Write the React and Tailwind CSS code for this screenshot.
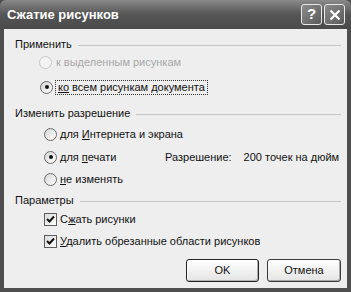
import React from 'react';

const font = { fontFamily: 'Tahoma, "Liberation Sans", "DejaVu Sans", sans-serif' };

const Radio = ({ checked, disabled }) => (
  <span
    className={`relative inline-block w-[13px] h-[13px] rounded-full border shrink-0 ${
      disabled ? 'border-[#c8c8c8] bg-[#f4f4f4]' : 'border-[#6a6a6a] bg-gradient-to-br from-[#d6d6d6] to-white'
    }`}
  >
    {checked && <span className="absolute left-[3.5px] top-[3.5px] w-[4px] h-[4px] rounded-full bg-[#111]" />}
  </span>
);

const Check = () => (
  <span className="inline-flex items-center justify-center w-[13px] h-[13px] border border-[#5c5c5c] bg-gradient-to-br from-[#dcdcdc] to-white shrink-0">
    <svg width="9" height="9" viewBox="0 0 9 9">
      <path d="M1 4 L3.5 6.5 L8 1.5" stroke="#111" strokeWidth="2" fill="none" />
    </svg>
  </span>
);

const Header = ({ children, className }) => (
  <div className={`flex items-center h-[18px] pl-[11px] pr-[6px] ${className}`}>
    <span className="text-[#111] whitespace-nowrap">{children}</span>
    <span className="flex-1 ml-[6px] h-[1px] bg-[#c4c4c4] mt-[2px]" />
  </div>
);

export default function App() {
  return (
    <div className="w-[351px] h-[292px] bg-[#4e4e4e] flex flex-col text-[11px] overflow-hidden" style={font}>
      {/* title bar */}
      <div className="h-[29px] flex items-center rounded-t-[6px] bg-gradient-to-b from-[#8a8a8a] via-[#555] to-[#4a4a4a] pl-[7px] pr-[6px] shrink-0">
        <span className="text-white font-bold text-[13px]" style={{ fontFamily: '"Liberation Sans", sans-serif' }}>
          Сжатие рисунков
        </span>
        <div className="ml-auto flex gap-[2px]">
          <div className="w-[21px] h-[21px] rounded-[3px] border border-[#e8e8e8] bg-gradient-to-br from-[#8c8c8c] to-[#5a5a5a] flex items-center justify-center text-white font-bold text-[15px]">
            ?
          </div>
          <div className="w-[21px] h-[21px] rounded-[3px] border border-[#e8e8e8] bg-gradient-to-br from-[#8c8c8c] to-[#5a5a5a] flex items-center justify-center">
            <svg width="12" height="12" viewBox="0 0 12 12">
              <path d="M1.5 1.5 L10.5 10.5 M10.5 1.5 L1.5 10.5" stroke="#fff" strokeWidth="2.2" />
            </svg>
          </div>
        </div>
      </div>

      {/* body */}
      <div className="flex-1 mx-[4px] mb-[4px] bg-[#eeeeee] flex flex-col pt-[6px] text-[#111]">
        <Header>Применить</Header>
        <div className="flex items-center h-[18px] pl-[35px]">
          <Radio disabled />
          <span className="ml-[4px] text-[#a8a8a8]">к выделенным рисункам</span>
        </div>
        <div className="flex items-center h-[18px] pl-[36px] mt-[7px]">
          <Radio checked />
          <span className="ml-[2px] px-[2px] border border-dotted border-[#333] leading-[13px]">
            <span className="underline">ко</span> всем рисункам документа
          </span>
        </div>

        <Header className="mt-[8px]">Изменить разрешение</Header>
        <div className="flex items-center h-[18px] pl-[40px] mt-[3px]">
          <Radio />
          <span className="ml-[3px]">
            для <span className="underline">И</span>нтернета и экрана
          </span>
        </div>
        <div className="flex items-center h-[18px] pl-[40px] mt-[5px]">
          <Radio checked />
          <span className="ml-[3px] w-[105px]">
            для <span className="underline">п</span>ечати
          </span>
          <span>Разрешение:</span>
          <span className="ml-[12px]">200 точек на дюйм</span>
        </div>
        <div className="flex items-center h-[18px] pl-[40px] mt-[4px]">
          <Radio />
          <span className="ml-[3px]">
            <span className="underline">н</span>е изменять
          </span>
        </div>

        <Header className="mt-[3px]">Параметры</Header>
        <div className="flex items-center h-[18px] pl-[40px] mt-[1px]">
          <Check />
          <span className="ml-[3px]">
            С<span className="underline">ж</span>ать рисунки
          </span>
        </div>
        <div className="flex items-center h-[18px] pl-[40px] mt-[4px]">
          <Check />
          <span className="ml-[3px]">
            <span className="underline">У</span>далить обрезанные области рисунков
          </span>
        </div>

        <div className="flex justify-end gap-[8px] pr-[6px] mt-[9px]">
          <button className="w-[73px] h-[23px] rounded-[3px] border border-[#222] bg-gradient-to-b from-white to-[#e4e4e4] shadow-[inset_-1px_-1px_0_#b0b0b0,inset_1px_1px_0_#fff] text-[#111]">
            OK
          </button>
          <button className="w-[74px] h-[23px] rounded-[3px] border border-[#3a3a3a] bg-gradient-to-b from-white to-[#e4e4e4] shadow-[inset_-1px_-1px_0_#a8a8a8] text-[#111]">
            Отмена
          </button>
        </div>
      </div>
    </div>
  );
}
